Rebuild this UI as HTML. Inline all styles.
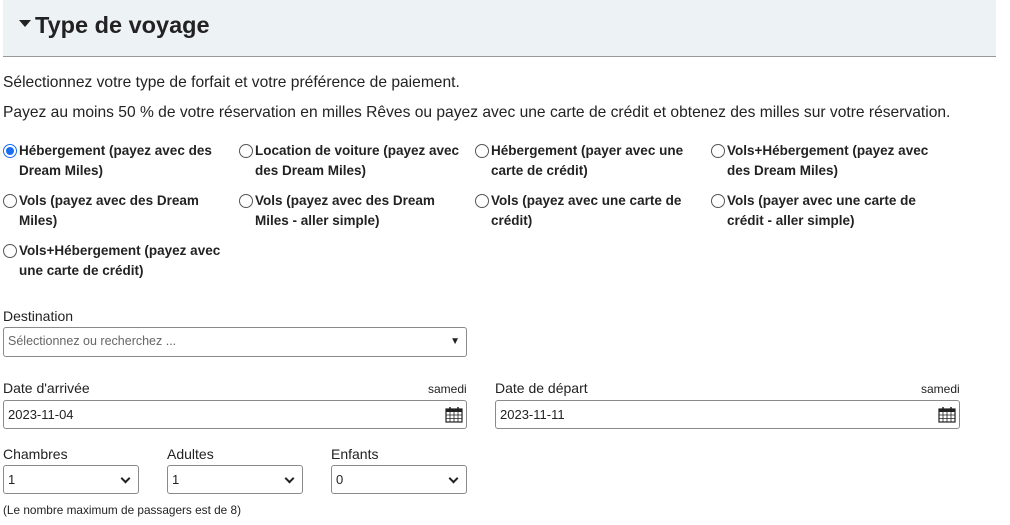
<!DOCTYPE html>
<html><head><meta charset="utf-8"><style>
body{margin:0;width:1010px;height:525px;background:#fff;font-family:"Liberation Sans",sans-serif;color:#222;position:relative;overflow:hidden}
.a{position:absolute;white-space:nowrap}
.hd{position:absolute;left:3px;top:0;width:993px;height:56px;background:#edf2f5;border-bottom:1px solid #999}
.hd h1{position:absolute;left:16px;top:12px;margin:0;font-size:23.5px;font-weight:bold;color:#222}
.tri{display:inline-block;width:0;height:0;border-left:6px solid transparent;border-right:6px solid transparent;border-top:7px solid #222;vertical-align:middle;margin-right:4px;position:relative;top:-3px}
.p{font-size:15.6px;color:#222}
.r{position:absolute;font-size:13.5px;font-weight:bold;line-height:20px;width:206px;padding-left:16px;color:#222}
.r i{position:absolute;left:0;top:3px;width:12px;height:12px;border:1px solid #555;border-radius:50%;background:#fff}
.r i.on{border-color:#1a6ef0}
.r i.on:after{content:"";position:absolute;left:2px;top:2px;width:8px;height:8px;border-radius:50%;background:#1a6ef0}
.lb{font-size:14px;color:#222}
.box{position:absolute;border:1px solid #8a8a8a;border-radius:3px;background:#fff;box-sizing:border-box;font-size:13px;line-height:27px;padding-left:4px}
.chev{position:absolute;right:9px;top:9px;width:5px;height:5px;border-right:2px solid #222;border-bottom:2px solid #222;transform:rotate(45deg)}
</style></head><body>
<div class="hd"><h1><span class="tri"></span>Type de voyage</h1></div>
<div class="a p" style="left:3px;top:74px">Sélectionnez votre type de forfait et votre préférence de paiement.</div>
<div class="a p" style="left:3px;top:104px">Payez au moins 50 % de votre réservation en milles Rêves ou payez avec une carte de crédit et obtenez des milles sur votre réservation.</div>

<div class="r" style="left:3px;top:141px"><i class="on"></i>Hébergement (payez avec des Dream Miles)</div>
<div class="r" style="left:239px;top:141px"><i></i>Location de voiture (payez avec des Dream Miles)</div>
<div class="r" style="left:475px;top:141px"><i></i>Hébergement (payer avec une carte de crédit)</div>
<div class="r" style="left:711px;top:141px"><i></i>Vols+Hébergement (payez avec des Dream Miles)</div>
<div class="r" style="left:3px;top:191px;width:196px"><i></i>Vols (payez avec des Dream Miles)</div>
<div class="r" style="left:239px;top:191px"><i></i>Vols (payez avec des Dream Miles - aller simple)</div>
<div class="r" style="left:475px;top:191px"><i></i>Vols (payez avec une carte de crédit)</div>
<div class="r" style="left:711px;top:191px"><i></i>Vols (payer avec une carte de crédit - aller simple)</div>
<div class="r" style="left:3px;top:241px"><i></i>Vols+Hébergement (payez avec une carte de crédit)</div>

<div class="a lb" style="left:3px;top:308px">Destination</div>
<div class="box" style="left:3px;top:327px;width:464px;height:30px;color:#666;font-size:12.5px">Sélectionnez ou recherchez ...<span style="position:absolute;right:6px;top:0;color:#222;font-size:10px">▼</span></div>

<div class="a lb" style="left:3px;top:380px">Date d'arrivée</div>
<div class="a" style="left:428px;top:382px;font-size:12px">samedi</div>
<div class="box" style="left:3px;top:400px;width:464px;height:29px">2023-11-04
<svg style="position:absolute;right:3px;top:5px" width="18" height="17" viewBox="0 0 18 17"><rect x="1" y="3" width="16" height="13" fill="none" stroke="#222" stroke-width="1.2"/><rect x="1" y="3" width="16" height="3" fill="#222"/><path d="M1 9h16M1 12.5h16M5 6v10M9 6v10M13 6v10" stroke="#222" stroke-width=".8"/><path d="M5 1v3M13 1v3" stroke="#222" stroke-width="1.5"/></svg></div>
<div class="a lb" style="left:495px;top:380px">Date de départ</div>
<div class="a" style="left:921px;top:382px;font-size:12px">samedi</div>
<div class="box" style="left:495px;top:400px;width:465px;height:29px">2023-11-11
<svg style="position:absolute;right:3px;top:5px" width="18" height="17" viewBox="0 0 18 17"><rect x="1" y="3" width="16" height="13" fill="none" stroke="#222" stroke-width="1.2"/><rect x="1" y="3" width="16" height="3" fill="#222"/><path d="M1 9h16M1 12.5h16M5 6v10M9 6v10M13 6v10" stroke="#222" stroke-width=".8"/><path d="M5 1v3M13 1v3" stroke="#222" stroke-width="1.5"/></svg></div>

<div class="a lb" style="left:3px;top:446px">Chambres</div>
<div class="a lb" style="left:167px;top:446px">Adultes</div>
<div class="a lb" style="left:331px;top:446px">Enfants</div>
<div class="box" style="left:3px;top:465px;width:136px;height:29px">1<span class="chev"></span></div>
<div class="box" style="left:167px;top:465px;width:136px;height:29px">1<span class="chev"></span></div>
<div class="box" style="left:331px;top:465px;width:136px;height:29px">0<span class="chev"></span></div>
<div class="a" style="left:3px;top:503px;font-size:11.8px">(Le nombre maximum de passagers est de 8)</div>
</body></html>
